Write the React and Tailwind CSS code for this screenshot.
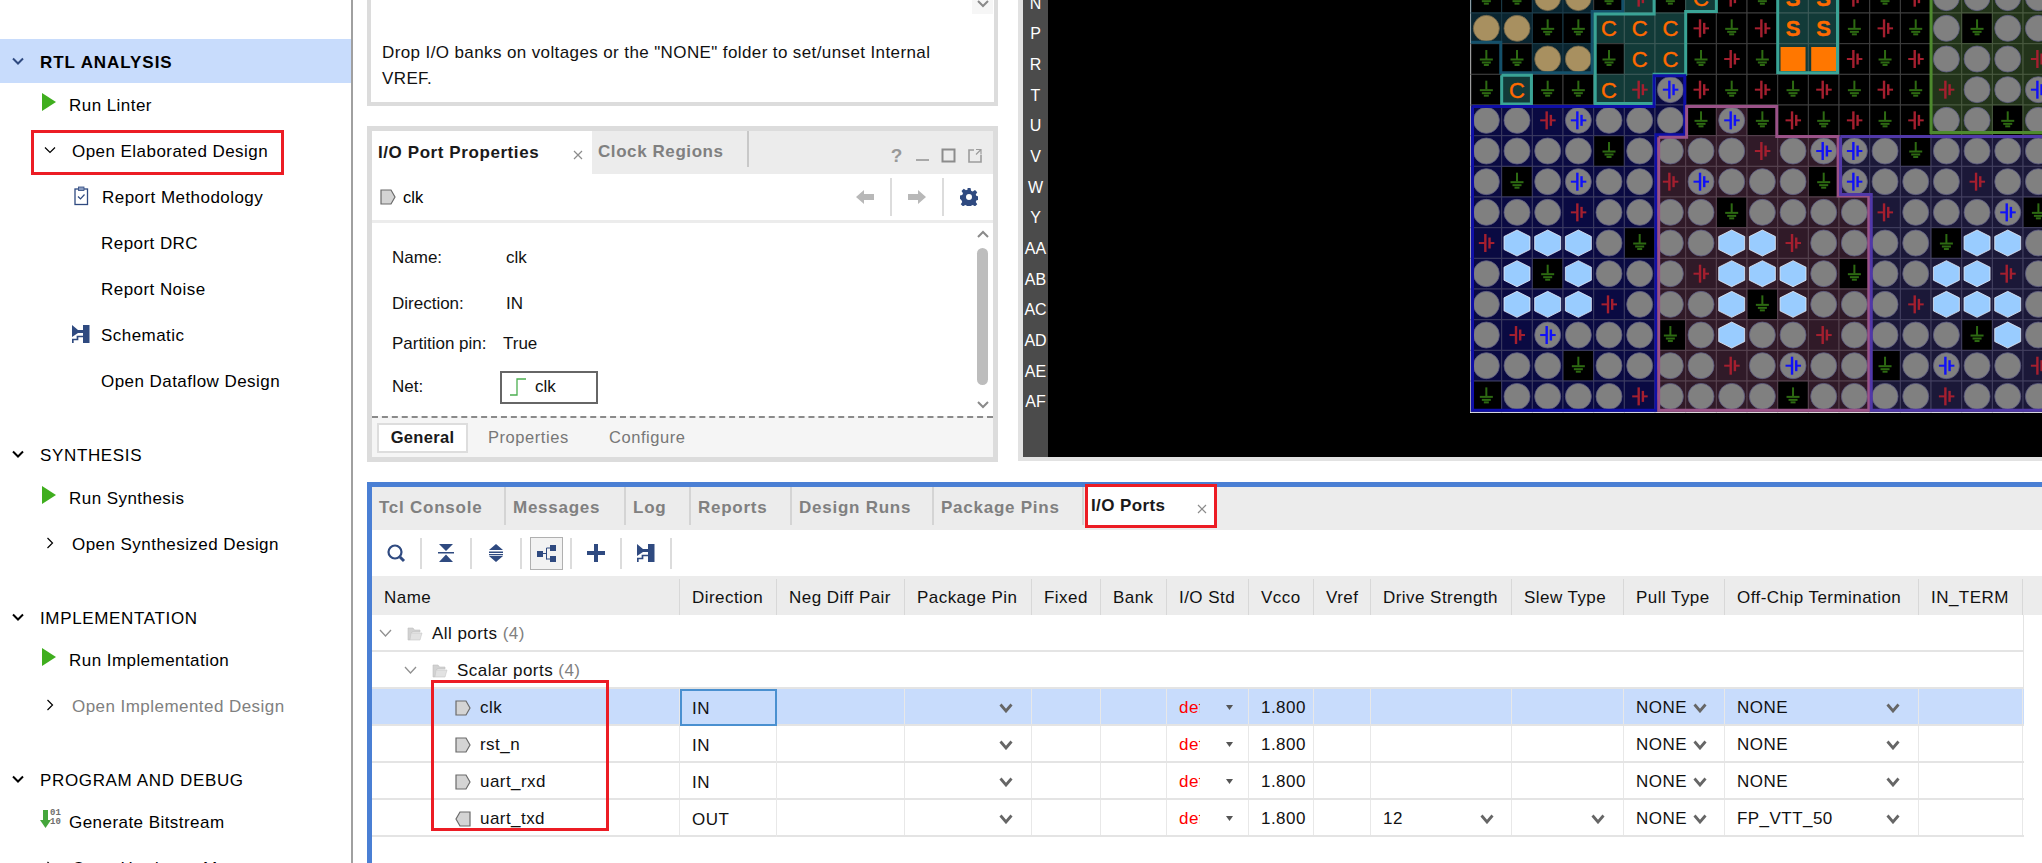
import React from 'react';

const FONT = "font-['Liberation_Sans',Arial,sans-serif]";
const NAVY = '#2f4a80';

// pin grid: g gnd, r vcc red, b vref blue, o free pin, h hex, t tan, C/S orange letters, F filled
const PINS = [
  'g g t t g r g C r g S S r g r o o o o',
  't t g g C C C r g r S S g r g o g o o',
  'g g t t g C C g r g F F r g r o o o r',
  'g C g g C r b r g r g r g r g r o o b',
  'o o r b o o o g b g r g r g r o o g o',
  'o o o o g o o o o r o b b o g o o o o',
  'o g o b o o r b o o o g b o o o r o o',
  'o o o r o o o o g o o o o r o o o b g',
  'r h h h o g o o h h r o o o o g h h o',
  'o h g h o o o r h h h o g o o h h r o',
  'o h h h r o o o h g h o o o r h h h o',
  'o r b o o o g o h o o r o o o o g h o',
  'o o o g o o o o r o b o o g o b o o r',
  'g o o o o r o o o o g o o o o r o o o',
].map((r) => r.split(' '));

// bank tint per cell
const BANKS = [
  'd d d d . c . c . . e e . . . l l l l',
  'd d d d c c c . . . e e . . . l l l l',
  '. . d d . c c . . . e e . . . l l l l',
  '. c . . c c n . . . . . . . . l l l l',
  'n n n n n n n m m m . . . . . l l l l',
  'n n n n n n m m m m m m p p p p p p p',
  'n n n n n n m m m m m m p p p p p p p',
  'n n n n n n m m m m m m m p p p p p p',
  'n n n n n n m m m m m m m p p p p p p',
  'n n n n n n m m m m m m m p p p p p p',
  'n n n n n n m m m m m m m p p p p p p',
  'n n n n n n m m m m m m m p p p p p p',
  'n n n n n n m m m m m m m p p p p p p',
  'n n n n n n m m m m m m m p p p p p p',
].map((r) => r.split(' '));

const TINT = { d: '#0a2530', c: '#123a38', e: '#123a38', n: '#0a0a42', m: '#301a28', p: '#1b1838', l: '#22331a', '.': '#000000' };
const LINE = { d: '#1c3c4a', c: '#3c5a58', e: '#3c5a58', n: '#3c3c62', m: '#574350', p: '#434060', l: '#4a5a40', '.': '#3f3f3f' };

const CELL = 30.67;
const OX = 1;
const OY = -17.67;
const px = (c) => OX + c * CELL;
const py = (r) => OY + r * CELL;

// bank outlines in grid units, inset a little like the tool draws them
const OUTLINES = [
  { color: '#14506a', pts: [[0, 1.95], [0.97, 1.95], [0.97, 2.95], [3.95, 2.95], [3.95, 0.95], [4.95, 0.95], [4.95, -1]] },
  { color: '#3aa496', pts: [[5.97, -1], [5.97, 1.03], [4.05, 1.03], [4.05, 3.95], [5.97, 3.95], [5.97, 3], [7, 3], [7, 0.95], [8, 0.95], [8, -1]] },
  { color: '#3aa496', pts: [[1, 3.03], [1.97, 3.03], [1.97, 3.97], [1, 3.97], [1, 3.03]] },
  { color: '#3aa496', pts: [[10, -1], [10, 2.95], [11.95, 2.95], [11.95, -1]] },
  { color: '#0f0fa8', pts: [[0.05, 4.05], [5.97, 4.05], [5.97, 3.05], [6.97, 3.05], [6.97, 4.97], [6.03, 4.97], [6.03, 13.95], [0.05, 13.95], [0.05, 4.05]] },
  { color: '#9a5288', pts: [[6.12, 5.05], [7.03, 5.05], [7.03, 4.05], [9.97, 4.05], [9.97, 5.03], [11.97, 5.03], [11.97, 6.97], [12.97, 6.97], [12.97, 13.95], [6.12, 13.95], [6.12, 5.05]] },
  { color: '#5038a8', pts: [[12.05, 5.03], [19.5, 5.03], [19.5, 13.95], [13.05, 13.95], [13.05, 6.92], [12.05, 6.92], [12.05, 5.03]] },
  { color: '#4e8a2e', pts: [[15, -1], [15, 4.9], [19.5, 4.9]] },
];

function GroundGlyph({ x, y }) {
  return (
    <g transform={`translate(${x} ${y})`} fill="#2d6a12">
      <rect x="-1" y="-9" width="2" height="9" />
      <rect x="-6.5" y="-0.5" width="13" height="2" />
      <rect x="-4.5" y="2.5" width="9" height="2" />
      <rect x="-2.5" y="5" width="5" height="2" />
    </g>
  );
}

function PowerGlyph({ x, y, color }) {
  return (
    <g transform={`translate(${x} ${y})`} fill={color}>
      <rect x="-7.5" y="-1" width="6" height="2" />
      <rect x="-2.2" y="-9" width="2.4" height="18" />
      <rect x="2" y="-5.5" width="2.4" height="11" />
      <rect x="3" y="-1" width="5" height="2" />
    </g>
  );
}

function Pin({ kind, x, y }) {
  if (kind === 'g') return <GroundGlyph x={x} y={y} />;
  if (kind === 'r') return <PowerGlyph x={x} y={y} color="#a51f2f" />;
  if (kind === 'o' || kind === 't' || kind === 'b') {
    return (
      <g>
        <circle cx={x} cy={y} r="13" fill={kind === 't' ? '#a89060' : '#808080'} stroke={kind === 't' ? '#6e6248' : '#5c5a80'} strokeWidth="0.8" />
        {kind === 'b' && <PowerGlyph x={x} y={y} color="#1010f8" />}
      </g>
    );
  }
  if (kind === 'h') {
    return <polygon points={`${x},${y - 13} ${x + 13},${y - 6.5} ${x + 13},${y + 6.5} ${x},${y + 13} ${x - 13},${y + 6.5} ${x - 13},${y - 6.5}`} fill="#99ccff" stroke="#e6ecf6" strokeWidth="0.8" />;
  }
  if (kind === 'F') return <rect x={x - 12.5} y={y - 12} width="25" height="24" fill="#ff7700" />;
  return (
    <text x={x} y={y + 8} textAnchor="middle" fontFamily="Liberation Sans, Arial, sans-serif" fontSize="22" fontWeight={kind === 'S' ? 700 : 400} fill="#ff6a00" stroke="#ff6a00" strokeWidth="0.4">
      {kind}
    </text>
  );
}

function PinGrid() {
  const cells = [];
  PINS.forEach((row, r) => {
    row.forEach((kind, c) => {
      const bank = kind === 'g' ? '.' : BANKS[r][c];
      cells.push(<rect key={`b${r}-${c}`} x={px(c)} y={py(r)} width={CELL} height={CELL} fill={TINT[bank]} stroke={LINE[BANKS[r][c]]} strokeWidth="1" />);
    });
  });
  return (
    <svg width="572" height="413" viewBox="0 0 572 413" className="absolute left-[447px] top-0">
      <rect x="0" y="0" width="572" height="413" fill="#ffffff" />
      <rect x="1" y="-20" width="572" height="431.7" fill="#000000" />
      {cells}
      {PINS.map((row, r) =>
        row.map((kind, c) => <Pin key={`p${r}-${c}`} kind={kind} x={px(c) + CELL / 2} y={py(r) + CELL / 2} />)
      )}
      {OUTLINES.map((o, i) => (
        <polyline key={i} points={o.pts.map(([c, r]) => `${px(c)},${py(r)}`).join(' ')} fill="none" stroke={o.color} strokeWidth="3" />
      ))}
    </svg>
  );
}

function Chevron({ open = true, color = '#000000', width = 1.2, size = 14 }) {
  return (
    <svg width={size} height={size} viewBox="0 0 14 14" className="shrink-0">
      <polyline points={open ? '2,4.5 7,9.5 12,4.5' : '4.5,2 9.5,7 4.5,12'} fill="none" stroke={color} strokeWidth={width} />
    </svg>
  );
}

function Play() {
  return (
    <svg width="15" height="18" viewBox="0 0 15 18" className="shrink-0 -mt-[4px]">
      <polygon points="0,0 14,9 0,18" fill="#3fae1e" />
    </svg>
  );
}

function SchematicIcon({ size = 18 }) {
  return (
    <svg width={size} height={size} viewBox="0 0 18 18" className="shrink-0" fill={NAVY}>
      <rect x="11" y="0" width="6.500" height="18" />
      <polygon points="0,0 6,5 11,5 11,8 6,8 0,12" />
      <polyline points="0.800,18 0.800,14.500 5.500,14.500 5.500,11.500 11,11.500" fill="none" stroke={NAVY} strokeWidth="1.700" />
    </svg>
  );
}

function ClipboardIcon() {
  return (
    <svg width="15" height="20" viewBox="0 0 15 20" className="shrink-0" fill="none">
      <rect x="1" y="3" width="12.500" height="15.500" stroke={NAVY} strokeWidth="1.300" />
      <rect x="4.500" y="1" width="5.500" height="3.500" fill="#8a9cc0" stroke={NAVY} strokeWidth="0.800" />
      <polyline points="4,10.500 6.500,13 10.500,8.500" stroke={NAVY} strokeWidth="1.200" />
    </svg>
  );
}

function BitstreamIcon() {
  return (
    <div className="relative w-[20px] h-[18px] shrink-0 -mt-[4px]">
      <svg width="11" height="18" viewBox="0 0 11 18" className="absolute left-0 top-0">
        <path d="M3 0h5v10h3l-5.500 8L0 10h3z" fill="#45a63c" />
      </svg>
      <div className="absolute left-[10px] -top-[1px] text-[9px] leading-[9px] tracking-normal text-[#6e6e6e] font-['Liberation_Mono',monospace] font-bold">
        01
        <br />
        10
      </div>
    </div>
  );
}

function SidebarRow({ icon, label, indent, color = 'text-black', gap }) {
  return (
    <div className={`flex items-center h-[46px] text-[17px] tracking-[0.45px] ${color}`} style={{ paddingLeft: indent, gap }}>
      {icon}
      <span className="whitespace-nowrap pt-[3px]">{label}</span>
    </div>
  );
}

function SectionHead({ label, bold, selected }) {
  return (
    <div className={`flex items-center h-[44px] pl-[11px] gap-[15px] text-[17px] text-black ${selected ? 'bg-[#c8dcfc]' : ''} ${bold ? 'font-bold tracking-[0.95px]' : 'tracking-[0.65px]'}`}>
      <Chevron color={selected ? NAVY : '#000000'} width={2} />
      <span className="whitespace-nowrap pt-[4px]">{label}</span>
    </div>
  );
}

function Sidebar() {
  return (
    <div className="w-[353px] shrink-0 h-[863px] border-r-2 border-[#a0a0a0] pt-[39px] overflow-hidden">
      <SectionHead label="RTL ANALYSIS" bold selected />
      <div className="-mt-[2px]">
        <SidebarRow icon={<Play />} label="Run Linter" indent={42} gap={12} />
        <div className="relative">
          <SidebarRow icon={<Chevron />} label="Open Elaborated Design" indent={43} gap={15} />
          <div className="absolute left-[31px] top-[3px] w-[253px] h-[45px] border-[3px] border-[#ec1c24]" />
        </div>
        <SidebarRow icon={<ClipboardIcon />} label="Report Methodology" indent={74} gap={13} />
        <SidebarRow label="Report DRC" indent={101} />
        <SidebarRow label="Report Noise" indent={101} />
        <SidebarRow icon={<SchematicIcon />} label="Schematic" indent={72} gap={11} />
        <SidebarRow label="Open Dataflow Design" indent={101} />
      </div>
      <div className="h-[29px]" />
      <SectionHead label="SYNTHESIS" />
      <div className="-mt-[2px]">
        <SidebarRow icon={<Play />} label="Run Synthesis" indent={42} gap={12} />
        <SidebarRow icon={<Chevron open={false} />} label="Open Synthesized Design" indent={43} gap={15} />
      </div>
      <div className="h-[29px]" />
      <SectionHead label="IMPLEMENTATION" />
      <div className="-mt-[3px]">
        <SidebarRow icon={<Play />} label="Run Implementation" indent={42} gap={12} />
        <SidebarRow icon={<Chevron open={false} />} label="Open Implemented Design" indent={43} gap={15} color="text-[#808080]" />
      </div>
      <div className="h-[29px]" />
      <SectionHead label="PROGRAM AND DEBUG" />
      <div className="-mt-[3px]">
        <SidebarRow icon={<BitstreamIcon />} label="Generate Bitstream" indent={40} gap={9} />
        <SidebarRow icon={<Chevron open={false} />} label="Open Hardware Manager" indent={43} gap={15} />
      </div>
    </div>
  );
}

function PortIcon({ out = false, w = 16, h = 16 }) {
  return (
    <svg width={w} height={h} viewBox="0 0 16 16" className="shrink-0">
      <polygon points={out ? '15,1 5,1 1,8 5,15 15,15' : '1,1 11,1 15,8 11,15 1,15'} fill="#d4d4d4" stroke="#6a6a6a" strokeWidth="1.200" />
    </svg>
  );
}

function WindowIcons() {
  return (
    <div className="flex items-center gap-[12px] ml-auto pr-[11px] pt-[6px]">
      <span className="w-[15px] text-center text-[19px] font-bold text-[#999999] leading-none">?</span>
      <svg width="13" height="16" viewBox="0 0 13 16"><rect x="0" y="11" width="13" height="2" fill="#a8a8a8" /></svg>
      <svg width="15" height="15" viewBox="0 0 15 15"><rect x="1.500" y="1.500" width="12" height="12" fill="none" stroke="#8c8c8c" strokeWidth="2" /></svg>
      <svg width="14" height="15" viewBox="0 0 14 15" fill="none" stroke="#9c9c9c" strokeWidth="1.600">
        <path d="M6 2H1v12h12V7" />
        <path d="M8 1.500h5v5M13 1.500L8 6.500" strokeWidth="1.200" />
      </svg>
    </div>
  );
}

function HelpPanel() {
  return (
    <div className="relative h-[106px] border-x-4 border-b-4 border-[#dcdcdc] bg-white shrink-0">
      <div className="absolute right-[1px] top-0 w-[21px] h-[14px] bg-[#f6f6f6] flex justify-center">
        <svg width="14" height="10" viewBox="0 0 14 10"><polyline points="2,1 7,6 12,1" fill="none" stroke="#8a8a8a" strokeWidth="2" /></svg>
      </div>
      <div className="pl-[11px] pt-[40px] text-[17px] leading-[26px] tracking-[0.39px] text-[#111111]">
        <div className="whitespace-nowrap">Drop I/O banks on voltages or the "NONE" folder to set/unset Internal</div>
        <div>VREF.</div>
      </div>
    </div>
  );
}

function PropRow({ label, children, height, labelW = 114 }) {
  return (
    <div className="flex items-center text-[17px] text-[#111111]" style={{ height }}>
      <span className="whitespace-nowrap" style={{ width: labelW }}>{label}</span>
      {children}
    </div>
  );
}

function PropertiesPanel() {
  return (
    <div className="mt-[20px] h-[336px] border-[5px] border-[#dcdcdc] bg-white flex flex-col shrink-0">
      <div className="flex h-[43px] bg-[#ececec] shrink-0">
        <div className="w-[220px] bg-white flex items-center pl-[6px] pr-[6px] text-[17px] font-bold tracking-[0.58px] text-[#1a1a1a]">
          <span className="whitespace-nowrap">I/O Port Properties</span>
          <svg width="10" height="10" viewBox="0 0 10 10" className="ml-auto mt-[4px] mr-[3px]"><path d="M1 1l8 8M9 1l-8 8" stroke="#8c8c8c" strokeWidth="1.200" /></svg>
        </div>
        <div className="flex items-center pl-[6px] w-[157px] text-[17px] font-bold tracking-[0.58px] text-[#808080] h-[36px] border-r-2 border-[#c8c8c8]">
          <span className="whitespace-nowrap pt-[6px]">Clock Regions</span>
        </div>
        <WindowIcons />
      </div>
      <div className="flex items-center h-[46px] shrink-0 pl-[8px] pr-[15px] border-b-[3px] border-[#ececec] box-content">
        <PortIcon />
        <span className="ml-[7px] text-[16.500px]">clk</span>
        <div className="ml-auto flex items-center">
          <svg width="18" height="16" viewBox="0 0 18 16"><path d="M0 8l8-7v4h10v6H8v4z" fill="#b8b8b8" /></svg>
          <div className="w-[2px] h-[38px] bg-[#dcdcdc] mx-[16px]" />
          <svg width="18" height="16" viewBox="0 0 18 16"><path d="M18 8l-8-7v4H0v6h10v4z" fill="#b8b8b8" /></svg>
          <div className="w-[2px] h-[38px] bg-[#dcdcdc] mx-[16px]" />
          <svg width="18" height="18" viewBox="0 0 24 24" fill={NAVY}>
            <path fillRule="evenodd" d="M10 0h4l.800 3.500 2.200 1 3-2 3 3-2 3 1 2.200 3.500.800v4l-3.500.800-1 2.200 2 3-3 3-3-2-2.200 1-.800 3.500h-4l-.800-3.500-2.200-1-3 2-3-3 2-3-1-2.200L-.500 14v-4l3.500-.800 1-2.200-2-3 3-3 3 2 2.200-1zM12 8a4 4 0 100 8 4 4 0 000-8z" />
          </svg>
        </div>
      </div>
      <div className="relative flex-1 min-h-0 pl-[20px] pt-[12px]">
        <PropRow label="Name:" height={46}><span>clk</span></PropRow>
        <PropRow label="Direction:" height={46}><span>IN</span></PropRow>
        <PropRow label="Partition pin:" height={34} labelW={111}><span>True</span></PropRow>
        <PropRow label="Net:" height={52} labelW={108}>
          <div className="flex items-center w-[98px] h-[33px] border-2 border-[#666666] pl-[8px] gap-[8px]">
            <svg width="17" height="20" viewBox="0 0 17 20"><polyline points="0,18 7,18 7,2 16,2" fill="none" stroke="#4caf50" strokeWidth="1.300" /></svg>
            <span>clk</span>
          </div>
        </PropRow>
        <div className="absolute right-0 top-0 bottom-0 w-[21px] flex flex-col items-center">
          <svg width="14" height="10" viewBox="0 0 14 10" className="mt-[6px]"><polyline points="2,8 7,3 12,8" fill="none" stroke="#8a8a8a" strokeWidth="2" /></svg>
          <div className="w-[11px] h-[137px] rounded-full bg-[#bdbdbd] mt-[9px]" />
          <svg width="14" height="10" viewBox="0 0 14 10" className="mt-[15px]"><polyline points="2,2 7,7 12,2" fill="none" stroke="#8a8a8a" strokeWidth="2" /></svg>
        </div>
      </div>
      <div className="h-[41px] shrink-0 border-t-2 border-dashed border-[#8a8a8a] bg-[#f5f5f5] flex items-center pl-[5px] text-[16.500px] tracking-[0.55px]">
        <div className="w-[91px] h-[30px] border-2 border-[#dddddd] bg-white flex items-center justify-center font-bold tracking-[0.3px] text-[#1a1a1a]">General</div>
        <span className="ml-[20px] w-[121px] text-[#777777]">Properties</span>
        <span className="text-[#777777]">Configure</span>
      </div>
    </div>
  );
}

function PackagePanel() {
  const labels = ['N', 'P', 'R', 'T', 'U', 'V', 'W', 'Y', 'AA', 'AB', 'AC', 'AD', 'AE', 'AF'];
  return (
    <div className="relative ml-[20px] flex-1 h-[461px] border-l-[5px] border-b-[4px] border-[#e2e2e2] bg-black overflow-hidden">
      <div className="w-[25px] h-full bg-[#4b4b4b] flex flex-col items-center overflow-hidden">
        <div className="-mt-[11.500px] shrink-0">
          {labels.map((l) => (
            <div key={l} className="h-[30.670px] flex items-center justify-center text-[16px] text-white">{l}</div>
          ))}
        </div>
      </div>
      <PinGrid />
    </div>
  );
}

function ToolBtn({ children, active }) {
  return (
    <div className="w-[50px] h-[31px] shrink-0 border-r-2 border-[#dcdcdc] flex items-center justify-center">
      <div className={`w-[33px] h-[33px] flex items-center justify-center shrink-0 ${active ? 'bg-[#f2f2f2] border border-[#b0b0b0]' : ''}`}>
        {children}
      </div>
    </div>
  );
}

function Toolbar() {
  return (
    <div className="flex items-center h-[46px] shrink-0">
      <ToolBtn>
        <svg width="20" height="20" viewBox="0 0 20 20" fill="none"><circle cx="9" cy="9" r="6.500" stroke={NAVY} strokeWidth="2.200" /><path d="M14 14l4 4" stroke={NAVY} strokeWidth="3" /></svg>
      </ToolBtn>
      <ToolBtn>
        <svg width="16" height="18" viewBox="0 0 16 18" fill={NAVY}><path d="M1 0h14L8 7zM0 8h16v1.500H0zM8 10.500L15 18H1z" /></svg>
      </ToolBtn>
      <ToolBtn>
        <svg width="16" height="18" viewBox="0 0 16 18" fill={NAVY}><path d="M8 0l7 6H1zM1 7.500h14v1.500H1zM1 10h14v1.200H1zM1 12h14l-7 6z" /></svg>
      </ToolBtn>
      <ToolBtn active>
        <svg width="19" height="19" viewBox="0 0 19 19" fill={NAVY}>
          <rect x="0" y="7" width="6" height="6" />
          <rect x="13" y="1" width="6" height="6" />
          <rect x="13" y="12" width="6" height="6" />
          <path d="M6 9.500h3.500M9.500 4v11.500M9.500 4H13M9.500 15H13" stroke={NAVY} strokeWidth="1" fill="none" />
        </svg>
      </ToolBtn>
      <ToolBtn>
        <svg width="18" height="18" viewBox="0 0 18 18" fill={NAVY}><path d="M7 0h4v7h7v4h-7v7H7v-7H0V7h7z" /></svg>
      </ToolBtn>
      <ToolBtn><SchematicIcon /></ToolBtn>
    </div>
  );
}

const COLS = [
  { label: 'Name', w: 308 },
  { label: 'Direction', w: 97 },
  { label: 'Neg Diff Pair', w: 128 },
  { label: 'Package Pin', w: 127 },
  { label: 'Fixed', w: 69 },
  { label: 'Bank', w: 66 },
  { label: 'I/O Std', w: 82 },
  { label: 'Vcco', w: 65 },
  { label: 'Vref', w: 57 },
  { label: 'Drive Strength', w: 141 },
  { label: 'Slew Type', w: 112 },
  { label: 'Pull Type', w: 101 },
  { label: 'Off-Chip Termination', w: 194 },
  { label: 'IN_TERM', w: 104 },
];

const PORTS = [
  { name: 'clk', dir: 'IN', term: 'NONE', selected: true },
  { name: 'rst_n', dir: 'IN', term: 'NONE' },
  { name: 'uart_rxd', dir: 'IN', term: 'NONE' },
  { name: 'uart_txd', dir: 'OUT', term: 'FP_VTT_50', drive: '12', out: true },
];

function DropChevron({ className = '' }) {
  return (
    <svg width="14" height="10" viewBox="0 0 14 10" className={`shrink-0 ${className}`}>
      <polyline points="1.500,1.500 7,8 12.500,1.500" fill="none" stroke="#666666" strokeWidth="2.800" />
    </svg>
  );
}

function Cell({ w, children, className = '' }) {
  return (
    <div className={`shrink-0 h-full flex items-center border-r border-[#e8e8e8] pl-[12px] pt-[2px] ${className}`} style={{ width: w }}>
      {children}
    </div>
  );
}

function Folder() {
  return (
    <svg width="16" height="16" viewBox="0 0 16 16" className="shrink-0">
      <path d="M1 2h5l1.500 2H13v2H5L3 14H1z" fill="#d2d2d2" stroke="#c0c0c0" strokeWidth="0.600" />
      <path d="M4 7h11l-2 7H3z" fill="#e2e2e2" stroke="#c8c8c8" strokeWidth="0.600" />
    </svg>
  );
}

function PortRow({ port }) {
  const bg = port.selected ? 'bg-[#c8dcfc]' : '';
  return (
    <div className={`flex h-[37px] w-[1652px] border-b-2 border-[#e4e4e4] ${bg}`}>
      <Cell w={COLS[0].w} className="!pl-[83px] gap-[9px]">
        <PortIcon out={port.out} />
        <span>{port.name}</span>
      </Cell>
      <div className={`shrink-0 w-[97px] h-[37px] flex items-center pl-[12px] pt-[2px] ${port.selected ? 'border-2 border-[#4a90d0] !pl-[10px]' : 'border-r border-[#e8e8e8]'}`}>{port.dir}</div>
      <Cell w={COLS[2].w} />
      <Cell w={COLS[3].w} className="justify-end pr-[18px]"><DropChevron /></Cell>
      <Cell w={COLS[4].w} />
      <Cell w={COLS[5].w} />
      <Cell w={COLS[6].w}>
        <span className="block w-[21px] overflow-hidden text-[#ff0000]">default</span>
        <svg width="7" height="5" viewBox="0 0 7 5" className="ml-[26px]"><polygon points="0,0 7,0 3.500,5" fill="#555555" /></svg>
      </Cell>
      <Cell w={COLS[7].w}>1.800</Cell>
      <Cell w={COLS[8].w} />
      <Cell w={COLS[9].w} className="justify-between pr-[17px]">
        <span>{port.drive}</span>
        {port.drive && <DropChevron />}
      </Cell>
      <Cell w={COLS[10].w} className="justify-end pr-[18px]">
        {port.drive && <DropChevron />}
      </Cell>
      <Cell w={COLS[11].w} className="gap-[6px]">
        <span>NONE</span>
        <DropChevron />
      </Cell>
      <Cell w={COLS[12].w} className="justify-between pr-[18px]">
        <span>{port.term}</span>
        <DropChevron />
      </Cell>
      <Cell w={COLS[13].w} />
    </div>
  );
}

function TreeRow({ indent, label }) {
  return (
    <div className="flex items-center h-[37px] w-[1652px] pt-[2px] border-b-2 border-r border-[#e4e4e4]" style={{ paddingLeft: indent }}>
      <svg width="13" height="9" viewBox="0 0 13 9" className="shrink-0"><polyline points="1,1 6.500,7 12,1" fill="none" stroke="#909090" strokeWidth="1.300" /></svg>
      <div className="ml-[15px]"><Folder /></div>
      <span className="ml-[9px] whitespace-nowrap">
        {label} <span className="text-[#808080]">(4)</span>
      </span>
    </div>
  );
}

function PortsPanel() {
  const tabs = [
    { label: 'Tcl Console', w: 134 },
    { label: 'Messages', w: 120 },
    { label: 'Log', w: 65 },
    { label: 'Reports', w: 101 },
    { label: 'Design Runs', w: 142 },
    { label: 'Package Pins', w: 150 },
  ];
  return (
    <div className="relative flex-1 min-h-0 ml-[14px] border-t-[5px] border-l-[5px] border-[#4a7fd4] flex flex-col text-[17px] tracking-[0.45px] text-[#111111]">
      <div className="flex h-[43px] bg-[#ececec] shrink-0 relative">
        {tabs.map((t) => (
          <div key={t.label} className="h-[38px] flex items-center pl-[7px] pt-[3px] border-r-2 border-[#d4d4d4] font-bold tracking-[0.75px] text-[#808080] whitespace-nowrap" style={{ width: t.w }}>
            {t.label}
          </div>
        ))}
        <div className="relative ml-[1px] -mt-[3px] w-[132px] h-[44px] bg-white border-[3px] border-[#ec1c24] flex items-center pl-[3px] font-bold tracking-[0.4px] text-[#1a1a1a] whitespace-nowrap">
          I/O Ports
          <svg width="10" height="10" viewBox="0 0 10 10" className="ml-auto mt-[6px] mr-[7px]"><path d="M1 1l8 8M9 1l-8 8" stroke="#8c8c8c" strokeWidth="1.200" /></svg>
        </div>
      </div>
      <Toolbar />
      <div className="h-[3px] bg-[#ececec] shrink-0" />
      <div className="flex h-[36px] bg-[#ececec] shrink-0">
        {COLS.map((c) => (
          <div key={c.label} className="shrink-0 h-full flex items-center pl-[12px] pt-[2px] border-r border-[#d8d8d8] whitespace-nowrap" style={{ width: c.w }}>
            {c.label}
          </div>
        ))}
      </div>
      <TreeRow indent={7} label="All ports" />
      <TreeRow indent={32} label="Scalar ports" />
      {PORTS.map((p) => <PortRow key={p.name} port={p} />)}
      <div className="absolute left-[59px] top-[193px] w-[178px] h-[151px] border-[3px] border-[#ec1c24]" />
    </div>
  );
}

export default function App() {
  return (
    <div className={`flex w-[2042px] h-[863px] overflow-hidden bg-white ${FONT}`}>
      <Sidebar />
      <div className="flex-1 min-w-0 flex flex-col">
        <div className="flex h-[482px] shrink-0">
          <div className="ml-[14px] w-[631px] shrink-0 flex flex-col">
            <HelpPanel />
            <PropertiesPanel />
          </div>
          <PackagePanel />
        </div>
        <PortsPanel />
      </div>
    </div>
  );
}
